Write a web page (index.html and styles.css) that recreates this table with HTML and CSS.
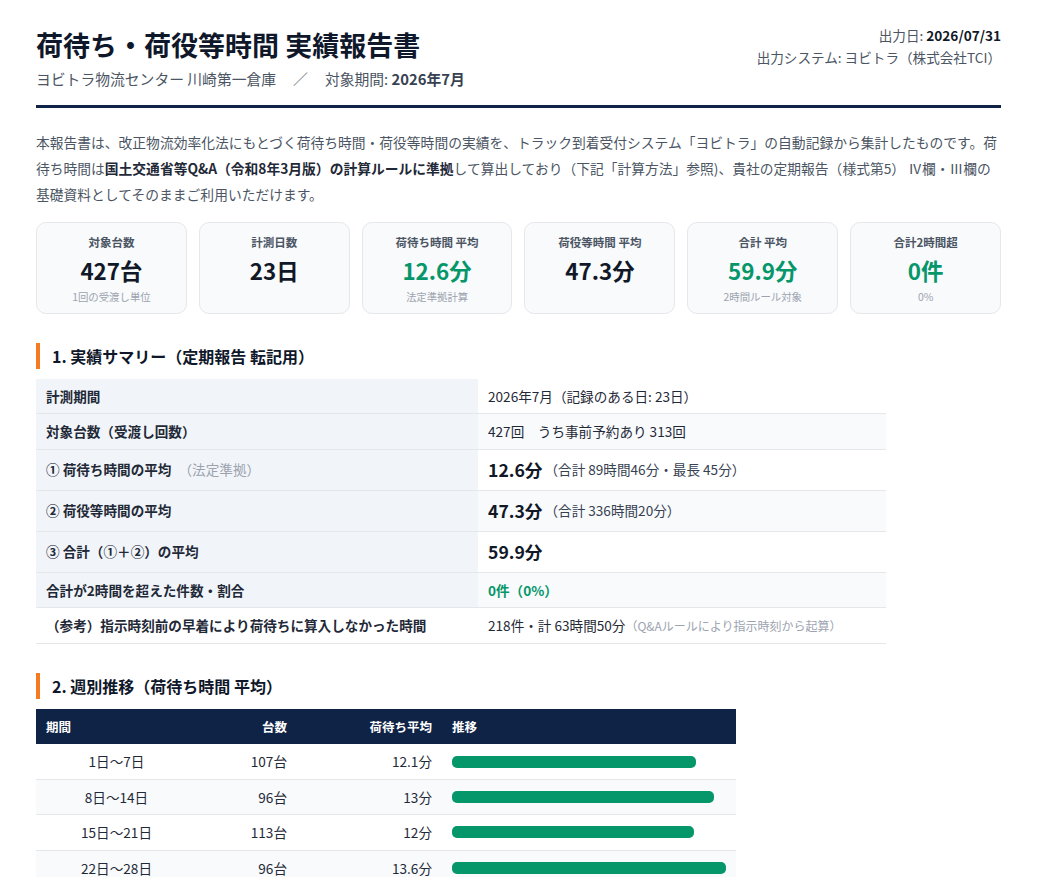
FILE: index.html
```html
<!DOCTYPE html>
<html lang="ja">
<head>
<meta charset="utf-8">
<title>荷待ち・荷役等時間 実績報告書</title>
<link rel="stylesheet" href="styles.css">
</head>
<body>
<div class="page">
  <header class="report-header">
    <div class="title-block">
      <h1>荷待ち・荷役等時間 実績報告書</h1>
      <p class="subtitle">ヨビトラ物流センター 川崎第一倉庫<span class="sep">／</span>対象期間: <strong>2026年7月</strong></p>
    </div>
    <div class="meta">
      <div>出力日: <strong>2026/07/31</strong></div>
      <div>出力システム: ヨビトラ（株式会社TCI）</div>
    </div>
  </header>

  <p class="intro">本報告書は、改正物流効率化法にもとづく荷待ち時間・荷役等時間の実績を、トラック到着受付システム「ヨビトラ」の自動記録から集計したものです。荷待ち時間は<strong>国土交通省等Q&amp;A（令和8年3月版）の計算ルールに準拠</strong>して算出しており（下記「計算方法」参照)、貴社の定期報告（様式第5） Ⅳ欄・Ⅲ欄の基礎資料としてそのままご利用いただけます。</p>

  <div class="kpis">
    <div class="kpi">
      <div class="kpi-label">対象台数</div>
      <div class="kpi-value">427台</div>
      <div class="kpi-sub">1回の受渡し単位</div>
    </div>
    <div class="kpi">
      <div class="kpi-label">計測日数</div>
      <div class="kpi-value">23日</div>
    </div>
    <div class="kpi">
      <div class="kpi-label">荷待ち時間 平均</div>
      <div class="kpi-value good">12.6分</div>
      <div class="kpi-sub">法定準拠計算</div>
    </div>
    <div class="kpi">
      <div class="kpi-label">荷役等時間 平均</div>
      <div class="kpi-value">47.3分</div>
    </div>
    <div class="kpi">
      <div class="kpi-label">合計 平均</div>
      <div class="kpi-value good">59.9分</div>
      <div class="kpi-sub">2時間ルール対象</div>
    </div>
    <div class="kpi">
      <div class="kpi-label">合計2時間超</div>
      <div class="kpi-value good">0件</div>
      <div class="kpi-sub">0%</div>
    </div>
  </div>

  <section class="section">
    <h2>1. 実績サマリー（定期報告 転記用）</h2>
    <table class="summary">
      <tbody>
        <tr>
          <th>計測期間</th>
          <td>2026年7月（記録のある日: 23日）</td>
        </tr>
        <tr class="alt">
          <th>対象台数（受渡し回数）</th>
          <td>427回　うち事前予約あり 313回</td>
        </tr>
        <tr>
          <th>① 荷待ち時間の平均 <span class="muted">（法定準拠）</span></th>
          <td><span class="big">12.6分</span><span class="note">（合計 89時間46分・最長 45分）</span></td>
        </tr>
        <tr class="alt">
          <th>② 荷役等時間の平均</th>
          <td><span class="big">47.3分</span><span class="note">（合計 336時間20分）</span></td>
        </tr>
        <tr>
          <th>③ 合計（①＋②）の平均</th>
          <td><span class="big">59.9分</span></td>
        </tr>
        <tr class="alt">
          <th>合計が2時間を超えた件数・割合</th>
          <td><span class="ok">0件（0%）</span></td>
        </tr>
        <tr class="ref">
          <th>（参考）指示時刻前の早着により荷待ちに算入しなかった時間</th>
          <td>218件・計 63時間50分<span class="hint">（Q&amp;Aルールにより指示時刻から起算）</span></td>
        </tr>
      </tbody>
    </table>
  </section>

  <section class="section">
    <h2>2. 週別推移（荷待ち時間 平均）</h2>
    <table class="weekly">
      <colgroup>
        <col class="c-period">
        <col class="c-count">
        <col class="c-avg">
        <col class="c-trend">
      </colgroup>
      <thead>
        <tr>
          <th class="left">期間</th>
          <th class="right">台数</th>
          <th class="right">荷待ち平均</th>
          <th class="left">推移</th>
        </tr>
      </thead>
      <tbody>
        <tr>
          <td class="center">1日〜7日</td>
          <td class="right">107台</td>
          <td class="right">12.1分</td>
          <td><div class="bar" style="width:89%"></div></td>
        </tr>
        <tr class="alt">
          <td class="center">8日〜14日</td>
          <td class="right">96台</td>
          <td class="right">13分</td>
          <td><div class="bar" style="width:95.6%"></div></td>
        </tr>
        <tr>
          <td class="center">15日〜21日</td>
          <td class="right">113台</td>
          <td class="right">12分</td>
          <td><div class="bar" style="width:88.2%"></div></td>
        </tr>
        <tr class="alt">
          <td class="center">22日〜28日</td>
          <td class="right">96台</td>
          <td class="right">13.6分</td>
          <td><div class="bar" style="width:100%"></div></td>
        </tr>
        <tr>
          <td class="center">29日〜31日</td>
          <td class="right">15台</td>
          <td class="right">12.1分</td>
          <td><div class="bar" style="width:89%"></div></td>
        </tr>
      </tbody>
    </table>
  </section>
</div>
</body>
</html>
```

FILE: styles.css
```css
* { box-sizing: border-box; }

body {
  margin: 0;
  background: #ffffff;
  color: #1f2937;
  font-family: "Noto Sans CJK JP", "Noto Sans", sans-serif;
}

.page {
  padding: 24px 48px 40px 36px;
}

/* Header */
.report-header {
  display: flex;
  justify-content: space-between;
  align-items: flex-start;
  padding-bottom: 16px;
  border-bottom: 3px solid #0f2346;
}

.report-header h1 {
  margin: 4px 0 0;
  font-size: 27px;
  line-height: 34px;
  font-weight: 700;
  color: #0f172a;
}

.subtitle {
  margin: 7px 0 0;
  font-size: 14.8px;
  line-height: 20px;
  color: #4b5563;
}

.subtitle strong {
  color: #374151;
}

.subtitle .sep {
  margin: 0 17px;
  color: #6b7280;
}

.meta {
  text-align: right;
  font-size: 13.6px;
  line-height: 22px;
  color: #4b5563;
}

.meta strong {
  color: #111827;
}

/* Intro */
.intro {
  margin: 22px 0 0;
  font-size: 13.78px;
  line-height: 1.88;
  color: #4b5563;
}

.intro strong {
  color: #1f2937;
}

/* KPI cards */
.kpis {
  display: grid;
  grid-template-columns: repeat(6, 1fr);
  gap: 12px;
  margin-top: 14px;
}

.kpi {
  background: #f8fafc;
  border: 1px solid #e5e7eb;
  border-radius: 10px;
  padding: 11px 8px 9px;
  text-align: center;
  min-height: 92px;
}

.kpi-label {
  font-size: 11.5px;
  line-height: 16px;
  font-weight: 700;
  color: #4b5563;
}

.kpi-value {
  margin-top: 6px;
  font-size: 22.4px;
  line-height: 28px;
  font-weight: 700;
  color: #111827;
}

.kpi-value.good {
  color: #059669;
}

.kpi-sub {
  margin-top: 6px;
  font-size: 10.4px;
  line-height: 14px;
  color: #9ca3af;
}

/* Sections */
.section {
  margin-top: 29px;
}

.section h2 {
  margin: 0 0 10px;
  padding-left: 12px;
  border-left: 4px solid #f47b20;
  font-size: 16px;
  line-height: 26px;
  font-weight: 700;
  color: #0f172a;
}

/* Summary table */
.summary {
  width: 850px;
  border-collapse: collapse;
  font-size: 13.6px;
  line-height: 20.4px;
}

.summary th,
.summary td {
  padding: 7px 10px;
  border-bottom: 1px solid #e5e7eb;
  text-align: left;
  vertical-align: middle;
}

.summary th {
  width: 442px;
  background: #f1f5f9;
  font-weight: 700;
  color: #1f2937;
}

.summary td {
  background: #ffffff;
  color: #1f2937;
}

.summary tr.alt td {
  background: #f8fafc;
}

.summary tr.ref th {
  background: #ffffff;
}

.summary .muted {
  margin-left: 4px;
  font-weight: 400;
  color: #9ca3af;
}

.summary .big {
  display: inline-block;
  font-size: 17.6px;
  line-height: 26px;
  font-weight: 700;
  color: #111827;
  vertical-align: middle;
}

.summary .note {
  margin-left: 2px;
  color: #374151;
  vertical-align: middle;
}

.summary .ok {
  font-weight: 700;
  color: #059669;
}

.summary .hint {
  font-size: 12px;
  color: #9ca3af;
}

/* Weekly table */
.weekly {
  width: 700px;
  border-collapse: collapse;
  table-layout: fixed;
}

.weekly .c-period { width: 161px; }
.weekly .c-count { width: 100px; }
.weekly .c-avg { width: 145px; }
.weekly .c-trend { width: 294px; }

.weekly th {
  background: #0f2346;
  color: #ffffff;
  font-size: 12.5px;
  line-height: 19px;
  font-weight: 700;
  padding: 8px 10px;
}

.weekly td {
  font-size: 13.6px;
  line-height: 20.4px;
  padding: 7px 10px;
  border-bottom: 1px solid #e5e7eb;
  color: #1f2937;
  vertical-align: middle;
}

.weekly tr.alt td {
  background: #f8fafc;
}

.weekly .left { text-align: left; }
.weekly .right { text-align: right; }
.weekly .center { text-align: center; }

.bar {
  height: 12px;
  border-radius: 5px;
  background: #059669;
}
```
